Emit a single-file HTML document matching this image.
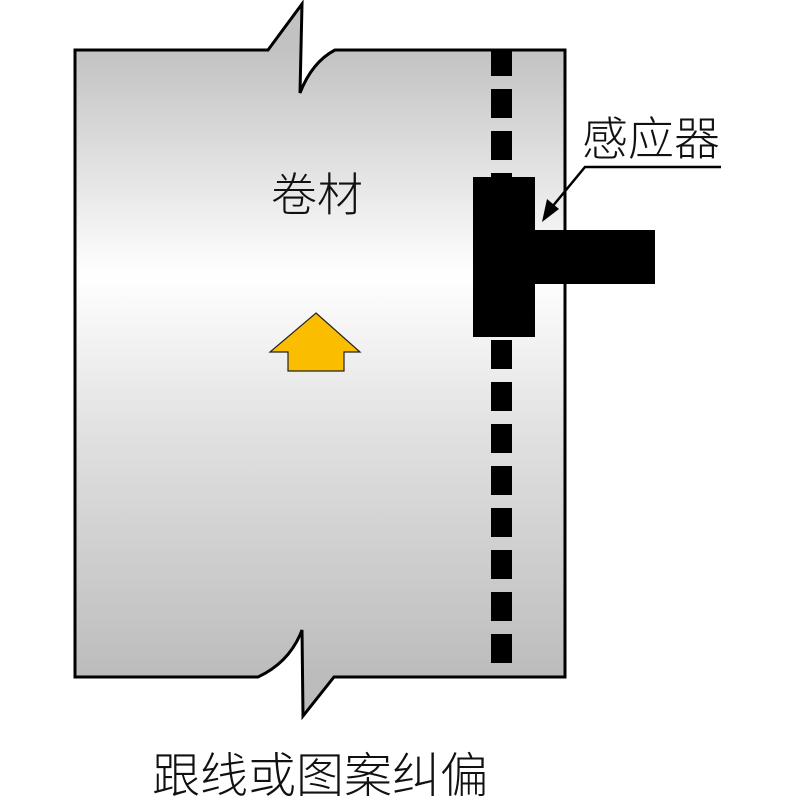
<!DOCTYPE html>
<html><head><meta charset="utf-8"><style>
html,body{margin:0;padding:0;background:#fff;width:800px;height:800px;overflow:hidden}
svg{display:block}
text{font-family:"Liberation Sans","Noto Sans CJK SC",sans-serif;fill:#111}
</style></head><body>
<svg width="800" height="800" viewBox="0 0 800 800">
<defs>
<linearGradient id="g" x1="0" y1="50" x2="0" y2="677" gradientUnits="userSpaceOnUse">
<stop offset="0" stop-color="#c2c2c2"/>
<stop offset="0.36" stop-color="#ffffff"/>
<stop offset="0.6" stop-color="#e2e2e2"/>
<stop offset="1" stop-color="#bcbcbc"/>
</linearGradient>
<clipPath id="c"><rect x="76" y="51" width="488" height="625"/></clipPath>
</defs>
<path d="M75,50 L268,50 L302,4 L300,93 Q312,62 335,50 L565,50 L565,677 L334,677 L303,716 L302,630 Q290,662 258,677 L75,677 Z" fill="url(#g)" stroke="#000" stroke-width="3" stroke-linejoin="miter"/>
<g clip-path="url(#c)" fill="#000">
<rect x="491" y="46" width="21" height="30"/>
<rect x="491" y="89" width="21" height="29"/>
<rect x="491" y="131" width="21" height="29"/>
<rect x="491" y="340" width="21" height="29"/>
<rect x="491" y="382" width="21" height="29"/>
<rect x="491" y="424" width="21" height="29"/>
<rect x="491" y="466" width="21" height="29"/>
<rect x="491" y="508" width="21" height="29"/>
<rect x="491" y="550" width="21" height="29"/>
<rect x="491" y="592" width="21" height="29"/>
<rect x="491" y="634" width="21" height="29"/>
</g>
<rect x="491" y="173" width="21" height="6" fill="#000"/>
<rect x="473" y="177" width="62" height="160" fill="#000"/>
<rect x="533" y="230" width="122" height="54" fill="#000"/>
<polyline points="721,167 585,167 552,207" fill="none" stroke="#000" stroke-width="2.5"/>
<polygon points="542,222 547,199 559,209" fill="#000"/>
<polygon points="316,313 360,352 344,352 344,371 288,371 288,352 270,352" fill="#fbbd00" stroke="#222" stroke-width="1.2"/>
<text x="271" y="211" font-size="46" font-weight="300">卷材</text>
<text x="582" y="155" font-size="46" font-weight="300">感应器</text>
<text x="152" y="792" font-size="48" font-weight="300">跟线或图案纠偏</text>
</svg>
</body></html>
